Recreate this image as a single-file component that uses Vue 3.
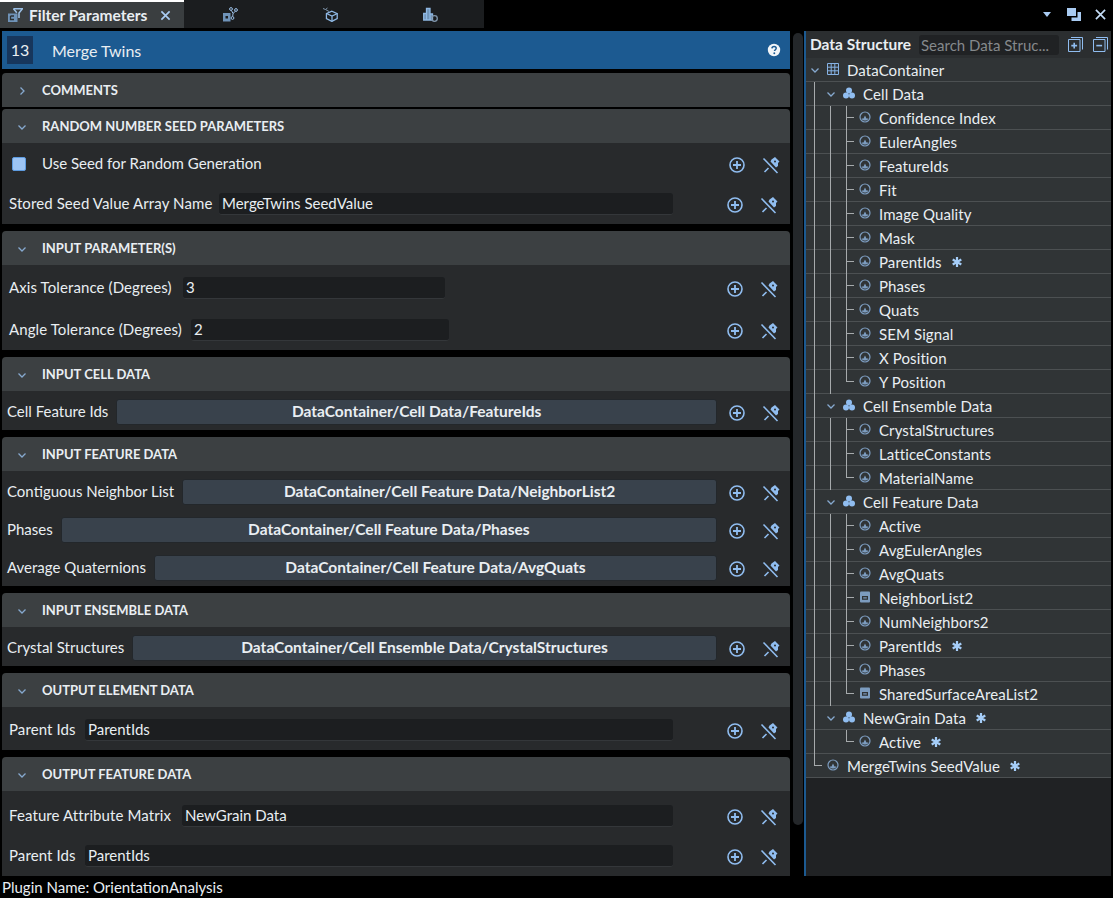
<script setup>
const sections = [
  { title: 'Comments', collapsed: true, tight: true },
  {
    title: 'Random Number Seed Parameters',
    body: 'seed',
    rows: [
      { type: 'check', label: 'Use Seed for Random Generation' },
      { type: 'text', label: 'Stored Seed Value Array Name', value: 'MergeTwins SeedValue', labelWidth: 210 },
    ],
  },
  {
    title: 'Input Parameter(s)',
    rows: [
      { type: 'text', label: 'Axis Tolerance (Degrees)', value: '3', labelWidth: 174, width: 262 },
      { type: 'text', label: 'Angle Tolerance (Degrees)', value: '2', labelWidth: 182, width: 258 },
    ],
  },
  {
    title: 'Input Cell Data',
    rows: [{ type: 'path', label: 'Cell Feature Ids', value: 'DataContainer/Cell Data/FeatureIds' }],
  },
  {
    title: 'Input Feature Data',
    rows: [
      { type: 'path', label: 'Contiguous Neighbor List', value: 'DataContainer/Cell Feature Data/NeighborList2' },
      { type: 'path', label: 'Phases', value: 'DataContainer/Cell Feature Data/Phases' },
      { type: 'path', label: 'Average Quaternions', value: 'DataContainer/Cell Feature Data/AvgQuats' },
    ],
  },
  {
    title: 'Input Ensemble Data',
    rows: [{ type: 'path', label: 'Crystal Structures', value: 'DataContainer/Cell Ensemble Data/CrystalStructures' }],
  },
  {
    title: 'Output Element Data',
    rows: [{ type: 'text', label: 'Parent Ids', value: 'ParentIds', labelWidth: 76 }],
  },
  {
    title: 'Output Feature Data',
    body: 'last',
    rows: [
      { type: 'text', label: 'Feature Attribute Matrix', value: 'NewGrain Data', labelWidth: 173 },
      { type: 'text', label: 'Parent Ids', value: 'ParentIds', labelWidth: 76 },
    ],
  },
]

const leaf = (label, extra = {}) => ({ label, kind: 'array', ...extra })

const tree = [
  {
    label: 'DataContainer',
    kind: 'grid',
    children: [
      {
        label: 'Cell Data',
        kind: 'matrix',
        children: [
          leaf('Confidence Index'),
          leaf('EulerAngles'),
          leaf('FeatureIds'),
          leaf('Fit'),
          leaf('Image Quality'),
          leaf('Mask'),
          leaf('ParentIds', { star: true }),
          leaf('Phases'),
          leaf('Quats'),
          leaf('SEM Signal'),
          leaf('X Position'),
          leaf('Y Position'),
        ],
      },
      {
        label: 'Cell Ensemble Data',
        kind: 'matrix',
        children: [leaf('CrystalStructures'), leaf('LatticeConstants'), leaf('MaterialName')],
      },
      {
        label: 'Cell Feature Data',
        kind: 'matrix',
        children: [
          leaf('Active'),
          leaf('AvgEulerAngles'),
          leaf('AvgQuats'),
          leaf('NeighborList2', { kind: 'list' }),
          leaf('NumNeighbors2'),
          leaf('ParentIds', { star: true }),
          leaf('Phases'),
          leaf('SharedSurfaceAreaList2', { kind: 'list' }),
        ],
      },
      {
        label: 'NewGrain Data',
        kind: 'matrix',
        star: true,
        children: [leaf('Active', { star: true })],
      },
    ],
  },
  leaf('MergeTwins SeedValue', { star: true }),
]

// flatten the tree, keeping which ancestor levels still need a guide line
const flatten = (nodes, depth, lines, out) => {
  nodes.forEach((node, index) => {
    const last = index === nodes.length - 1
    out.push({ ...node, depth, lines, last, open: !!node.children })
    if (node.children) {
      flatten(node.children, depth + 1, last ? lines : [...lines, depth], out)
    }
  })
  return out
}

const rows = flatten(tree, 0, [], [])
</script>

<template>
  <div class="app">
    <header class="topbar">
      <nav class="tabs">
        <div class="tab active">
          <svg class="tab-icon" viewBox="0 0 15 15" fill="none">
            <path d="M0 5.500h9.500V14H0z" fill="#6f93b8" />
            <path d="M2.500 8h3.500M2.500 8v3.500h3.500" stroke="#2c3134" stroke-width="1.300" />
            <path d="M5.500.8h9L11 5v5" stroke="#9cc0e6" stroke-width="1.500" />
            <path d="M8.800 4.800L5.500.8" stroke="#9cc0e6" stroke-width="1.500" />
          </svg>
          <span class="tab-title">Filter Parameters</span>
          <svg class="tab-close" viewBox="0 0 12 12" stroke="#a9cbf2" stroke-width="1.800">
            <path d="M1.500 1.500l9 9M10.500 1.500l-9 9" />
          </svg>
        </div>
        <div class="tab">
          <svg viewBox="0 0 15 15" fill="none">
            <path d="M0 6h7.500v8.500H0z" fill="#6f93b8" />
            <rect x="2.500" y="9" width="2.500" height="2.500" fill="#1b1d1f" />
            <circle cx="8" cy="2" r="1.400" stroke="#9cc0e6" />
            <circle cx="13" cy="3" r="1.400" stroke="#9cc0e6" />
            <circle cx="9.500" cy="11" r="1.400" stroke="#9cc0e6" />
            <path d="M8.500 3.500l1.500 3-.3 3M12.300 4.300L10 6.500" stroke="#9cc0e6" />
          </svg>
        </div>
        <div class="tab">
          <svg viewBox="0 0 15 15" fill="none" stroke="#8fb8e4" stroke-width="1.300">
            <path d="M3.500 6.500L9 4l5.500 2.500v5.200L9 14.500l-5.500-2.800z" transform="translate(0 .2) scale(.98)" />
            <path d="M3.500 6.500L9 9l5.500-2.500M9 9v5.500" />
            <path d="M0 1.500l2.500 1L4.500 1M2.500 2.500L6 4.500" stroke="#7f95ab" stroke-width="1" />
          </svg>
        </div>
        <div class="tab">
          <svg viewBox="0 0 15 15" fill="none" stroke="#8fb8e4" stroke-width="1.300">
            <path d="M.7 6.500h2.800v6.500H.7zM3.500 1.500h3.500V13H3.500zM7 7h2.500v6H7z" fill="#6f93b8" />
            <circle cx="11.500" cy="11.500" r="2.800" stroke="#7f95ab" />
          </svg>
        </div>
      </nav>
      <div class="win-buttons">
        <span class="win-menu"></span>
        <svg class="win-restore" viewBox="0 0 14 13">
          <path d="M0 0h9v8H0z" fill="#a9cbf2" />
          <path d="M10.500 4H14v9H4.500V9.500h6z" fill="#a9cbf2" />
        </svg>
        <svg class="win-close" viewBox="0 0 12 12" stroke="#c4dcf7" stroke-width="1.800">
          <path d="M1 1l10 10M11 1L1 11" />
        </svg>
      </div>
    </header>

    <main class="main">
      <section class="params">
        <div class="filter-head">
          <span class="filter-index">13</span>
          <span class="filter-name">Merge Twins</span>
          <svg class="help" viewBox="0 0 14 14">
            <circle cx="7" cy="7" r="6.200" fill="#f2f5f8" />
            <path d="M4.900 5.400c.1-1.300 1-2 2.200-2 1.300 0 2.100.8 2.100 1.800 0 1.500-1.700 1.500-1.700 2.900" fill="none" stroke="#1c5a91" stroke-width="1.500" />
            <circle cx="7.300" cy="10.300" r=".95" fill="#1c5a91" />
          </svg>
        </div>

        <article
          v-for="section in sections"
          :key="section.title"
          class="group"
          :class="{ tight: section.tight }"
        >
          <h3 class="group-head">
            <svg class="chevron" viewBox="0 0 10 10" fill="none" stroke="#86a9cf" stroke-width="1.300">
              <path v-if="section.collapsed" d="M3.500 1.500L7 5 3.500 8.500" />
              <path v-else d="M1.500 3.500L5 7l3.500-3.500" />
            </svg>
            {{ section.title }}
          </h3>
          <div
            v-if="section.rows"
            class="group-body"
            :class="[section.rows[0].type === 'path' ? 'paths' : 'texts', section.body]"
          >
            <div
              v-for="row in section.rows"
              :key="row.label"
              class="row"
              :class="`row-${row.type}`"
            >
              <template v-if="row.type === 'check'">
                <span class="check"></span>
                <span class="label">{{ row.label }}</span>
              </template>
              <template v-else>
                <span
                  class="label"
                  :style="row.labelWidth ? { width: `${row.labelWidth}px` } : null"
                >{{ row.label }}</span>
                <div v-if="row.type === 'path'" class="path-drop">{{ row.value }}</div>
                <div
                  v-else
                  class="text-input"
                  :class="{ grow: !row.width }"
                  :style="row.width ? { width: `${row.width}px` } : null"
                >{{ row.value }}</div>
              </template>
              <div class="row-tools">
                <svg class="tool-add" viewBox="0 0 16 16" fill="none" stroke="#90bdf0" stroke-width="1.600">
                  <circle cx="8" cy="8" r="7" />
                  <path d="M8 4v8M4 8h8" stroke-width="1.800" />
                </svg>
                <svg class="tool-pin" viewBox="0 0 18 18" fill="none" stroke="#90bdf0">
                  <path d="M9.500 3.500l3.500-2.500 4.500 4.500-1.500 1.500v3l-2 1.500L8.500 5.500z" fill="#90bdf0" stroke="none" />
                  <circle cx="13" cy="5.500" r="1" fill="#282a2c" stroke="none" />
                  <path d="M1.500 2.500l14 14.500" stroke-width="1.600" />
                  <path d="M2.500 16L6.500 12" stroke-width="1.600" />
                </svg>
              </div>
            </div>
          </div>
        </article>
      </section>

      <div class="scrollbar"></div>

      <aside class="structure">
        <div class="structure-head">
          <strong>Data Structure</strong>
          <div class="search">Search Data Struc...</div>
          <svg class="head-btn" viewBox="0 0 15 15" fill="none" stroke="#90bdf0">
            <path d="M.5 2.500h11.500v12H.5z" />
            <path d="M3 .5h11.500v12" />
            <path d="M6.200 5.700v5.800M3.300 8.600h5.800" stroke-width="1.600" />
          </svg>
          <svg class="head-btn" viewBox="0 0 15 15" fill="none" stroke="#90bdf0">
            <path d="M.5 2.500h11.500v12H.5z" />
            <path d="M3 .5h11.500v12" />
            <path d="M3.300 8.600h5.800" stroke-width="1.600" />
          </svg>
        </div>

        <div class="tree">
          <div
            v-for="(row, index) in rows"
            :key="index"
            class="tree-row"
            :style="{ paddingLeft: `${row.depth * 16}px` }"
          >
            <span
              v-for="level in row.lines"
              :key="level"
              class="guide"
              :style="{ left: `${8 + level * 16}px` }"
            ></span>
            <span
              v-if="!row.open"
              class="guide own"
              :class="{ end: row.last }"
              :style="{ left: `${8 + row.depth * 16}px` }"
            ></span>

            <span class="tree-arrow">
              <svg v-if="row.open" viewBox="0 0 10 10" fill="none" stroke="#86a9cf" stroke-width="1.300">
                <path d="M1.500 3.500L5 7l3.500-3.500" />
              </svg>
            </span>

            <svg class="tree-icon" viewBox="0 0 12 12">
              <g v-if="row.kind === 'grid'" fill="none" stroke="#86b2e4">
                <path d="M.5.500h11v11H.5zM.5 4.200h11M.5 7.800h11M4.200.500v11M7.800.500v11" />
              </g>
              <g v-else-if="row.kind === 'matrix'" fill="#90bdf0">
                <circle cx="6" cy="3.500" r="3" />
                <circle cx="3" cy="8.500" r="3" />
                <circle cx="9" cy="8.500" r="3" />
              </g>
              <g v-else-if="row.kind === 'list'">
                <rect x="1" y=".5" width="10" height="11" rx="1" fill="#7c9cbf" />
                <rect x="3" y="5" width="6" height="3.800" fill="#303436" />
                <rect x="4.200" y="6.300" width="3.600" height="1.200" fill="#7c9cbf" />
              </g>
              <g v-else>
                <circle cx="6" cy="6" r="5" fill="none" stroke="#7c9cbf" stroke-width="1.200" />
                <path d="M2.500 7.500h2l1.500-3 1.500 3h2c-.5 1.500-2 2-3.500 2s-3-.5-3.500-2z" fill="#7c9cbf" />
              </g>
            </svg>

            <span class="tree-label">{{ row.label }}</span>

            <svg v-if="row.star" class="tree-star" viewBox="0 0 10 10" stroke="#a5cdf8" stroke-width="2.200">
              <path d="M5 0v10M.7 2.500l8.600 5M9.300 2.500l-8.600 5" />
            </svg>
          </div>
        </div>
      </aside>
    </main>

    <footer class="status">Plugin Name: OrientationAnalysis</footer>
  </div>
</template>

<style scoped>
.app {
  width: 1113px;
  height: 898px;
  display: flex;
  flex-direction: column;
  overflow: hidden;
  background: #000;
  color: #e9eef2;
  font-family: Lato, "Open Sans", sans-serif;
  font-size: 15px;
}

.topbar {
  height: 28px;
  flex: none;
  display: flex;
  justify-content: space-between;
}

.tabs {
  display: flex;
  width: 484px;
  background: #1b1d1f;
}

.tab {
  width: 100px;
  display: flex;
  align-items: center;
  justify-content: center;
  padding: 0 8px 0 0;
  box-sizing: border-box;
}

.tab svg {
  width: 15px;
  height: 15px;
}

.tab.active {
  width: 184px;
  justify-content: flex-start;
  padding: 0 0 0 8px;
  background: #3a3e40;
  border-top: 2px solid #fff;
}

.tab-title {
  margin-left: 6px;
  font-weight: 700;
  font-size: 15.5px;
}

.tab .tab-close {
  width: 11px;
  height: 11px;
  margin-left: 13px;
}

.win-buttons {
  display: flex;
  align-items: center;
  padding: 0 7px 0 0;
}

.win-menu {
  width: 0;
  height: 0;
  margin-right: 16px;
  border-left: 4px solid transparent;
  border-right: 4px solid transparent;
  border-top: 5px solid #a9cbf2;
}

.win-restore {
  width: 14px;
  height: 13px;
  margin-right: 14px;
}

.win-close {
  width: 11px;
  height: 11px;
}

.main {
  flex: 1;
  min-height: 0;
  display: flex;
  padding: 3px 2px 0;
}

.params {
  width: 788px;
  flex: none;
  overflow: hidden;
}

.filter-head {
  height: 38px;
  display: flex;
  align-items: center;
  padding: 0 9px 0 5px;
  margin-bottom: 4px;
  background: #1c5a91;
}

.filter-index {
  width: 26px;
  height: 28px;
  line-height: 28px;
  text-align: center;
  font-size: 16px;
  background: #17365c;
}

.filter-name {
  margin-left: 19px;
  flex: 1;
  font-size: 16px;
}

.help {
  width: 14px;
  height: 14px;
}

.group {
  margin-bottom: 7px;
}

.group.tight {
  margin-bottom: 2px;
}

.group-head {
  height: 34px;
  margin: 0;
  display: flex;
  align-items: center;
  padding-left: 15px;
  border-radius: 4px 4px 0 0;
  background: #3c4042;
  font-size: 13px;
  font-weight: 700;
  text-transform: uppercase;
}

.chevron {
  width: 10px;
  height: 10px;
  margin: 2px 15px 0 0;
}

.group-body {
  display: flex;
  flex-direction: column;
  background: #282a2c;
}

.group-body.texts {
  gap: 20px;
  padding: 12px 12px 9px 7px;
}

.group-body.seed {
  gap: 18px;
  padding-top: 10px;
}

.group-body.last {
  gap: 18px;
  padding-top: 14px;
}

.group-body.paths {
  gap: 12px;
  padding: 8px 10px 5px 5px;
}

.row {
  display: flex;
  align-items: center;
  height: 22px;
}

.row-path {
  height: 26px;
}

.check {
  width: 14px;
  height: 14px;
  margin: 0 16px 0 3px;
  border-radius: 2px;
  border: 1px solid #5d9be0;
  background: #9cc4f4;
  box-sizing: border-box;
}

.label {
  flex: none;
  margin-right: 8px;
  padding-bottom: 2px;
  white-space: nowrap;
}

.row-text .label {
  margin-right: 0;
  letter-spacing: .1px;
}

.text-input {
  height: 22px;
  line-height: 21px;
  padding-left: 3px;
  box-sizing: border-box;
  border-radius: 3px;
  border-bottom: 1px solid #34373a;
  background: #1c1e20;
}

.text-input.grow {
  flex: 1;
  margin-right: 54px;
}

.path-drop {
  flex: 1;
  height: 26px;
  line-height: 23px;
  text-align: center;
  font-size: 15.5px;
  font-weight: 700;
  border-radius: 3px;
  box-sizing: border-box;
  border: 1px solid #23272b;
  background: #39424c;
}

.row-tools {
  display: flex;
  align-items: center;
  margin: 2px 0 0 auto;
  gap: 17px;
}

.row-path .row-tools {
  margin-left: 12px;
}

.row-check .row-tools {
  margin-right: -2px;
}

.tool-add {
  width: 16px;
  height: 16px;
}

.tool-pin {
  width: 18px;
  height: 18px;
}

.scrollbar {
  width: 10px;
  height: 792px;
  flex: none;
  margin: 2px 1px 0 3px;
  border-radius: 5px;
  background: #24272a;
}

.structure {
  width: 307px;
  height: 845px;
  flex: none;
  box-sizing: border-box;
  border-left: 2px solid #1c5a91;
  background: #202224;
}

.structure-head {
  height: 27px;
  display: flex;
  align-items: center;
  padding-left: 4px;
  background: #2b2e30;
}

.structure-head strong {
  flex: none;
  white-space: nowrap;
  font-size: 15.5px;
  padding-bottom: 1px;
}

.search {
  width: 140px;
  height: 20px;
  flex: none;
  line-height: 20px;
  margin: 0 9px 0 8px;
  padding-left: 2px;
  box-sizing: border-box;
  border-radius: 3px;
  background: #202224;
  color: #85898c;
  white-space: nowrap;
}

.head-btn {
  width: 15px;
  height: 15px;
  flex: none;
  margin-right: 10px;
}

.head-btn:last-child {
  margin-right: 0;
}

.tree-row {
  position: relative;
  height: 24px;
  display: flex;
  align-items: center;
  box-sizing: border-box;
  border-bottom: 1px solid #4c5052;
  background: #303436;
}

.guide {
  position: absolute;
  top: 0;
  bottom: -1px;
  width: 1px;
  background: #a6aaac;
}

.guide.own::after {
  content: '';
  position: absolute;
  top: 11px;
  left: 0;
  width: 8px;
  height: 1px;
  background: #a6aaac;
}

.guide.own.end {
  bottom: 12px;
}

.tree-arrow {
  width: 17px;
  height: 10px;
  flex: none;
  display: flex;
  justify-content: center;
}

.tree-arrow svg {
  width: 10px;
  height: 10px;
}

.tree-icon {
  width: 12px;
  height: 12px;
  flex: none;
  margin: -1px 0 0 4px;
}

.tree-label {
  margin-left: 8px;
  white-space: nowrap;
  letter-spacing: .1px;
}

.tree-star {
  width: 10px;
  height: 10px;
  margin-left: 10px;
}

.status {
  height: 22px;
  flex: none;
  line-height: 22px;
  padding-left: 2px;
}
</style>
